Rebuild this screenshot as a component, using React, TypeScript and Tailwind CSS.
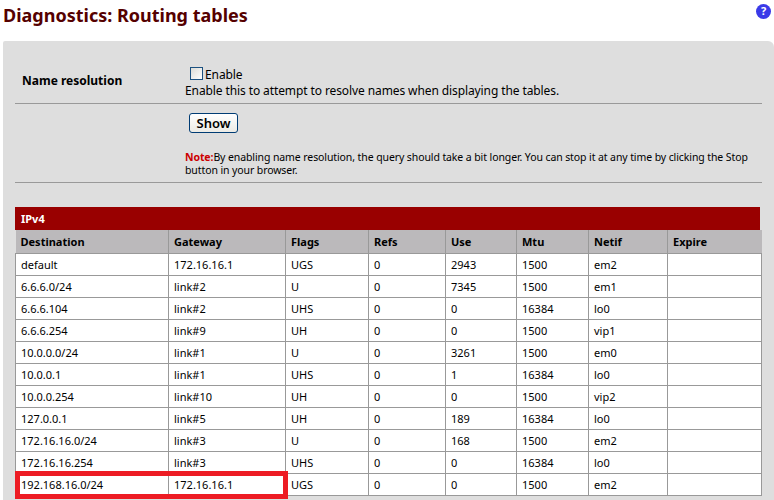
const columns = ["Destination", "Gateway", "Flags", "Refs", "Use", "Mtu", "Netif", "Expire"];

const routes = [
  ["default", "172.16.16.1", "UGS", "0", "2943", "1500", "em2", ""],
  ["6.6.6.0/24", "link#2", "U", "0", "7345", "1500", "em1", ""],
  ["6.6.6.104", "link#2", "UHS", "0", "0", "16384", "lo0", ""],
  ["6.6.6.254", "link#9", "UH", "0", "0", "1500", "vip1", ""],
  ["10.0.0.0/24", "link#1", "U", "0", "3261", "1500", "em0", ""],
  ["10.0.0.1", "link#1", "UHS", "0", "1", "16384", "lo0", ""],
  ["10.0.0.254", "link#10", "UH", "0", "0", "1500", "vip2", ""],
  ["127.0.0.1", "link#5", "UH", "0", "189", "16384", "lo0", ""],
  ["172.16.16.0/24", "link#3", "U", "0", "168", "1500", "em2", ""],
  ["172.16.16.254", "link#3", "UHS", "0", "0", "16384", "lo0", ""],
  ["192.168.16.0/24", "172.16.16.1", "UGS", "0", "0", "1500", "em2", ""],
];

const App = () => {
  return (
    <div className="relative h-[500px] w-[774px] overflow-hidden bg-white font-['Noto_Sans',sans-serif] text-[11px] text-black">
      <div className="flex h-[41px] items-start justify-between pl-[3px] pr-[3px]">
        <h1 className="mt-[4px] text-[18px] leading-[22px] font-bold text-[#550000]">Diagnostics: Routing tables</h1>
        <span className="mt-[4px] flex h-[15px] w-[15px] items-center justify-center rounded-full bg-[#3a3ae8] text-[11px] font-bold text-white">?</span>
      </div>

      <div className="ml-[3px] h-[459px] rounded-tr-[6px] rounded-tl-[2px] bg-[#dedede] pl-[12px] pr-[12px]">
        <div className="flex h-[63px] border-b border-[#999999]">
          <div className="w-[170px] pl-[7px] pt-[33px] text-[12px] leading-[14px] font-bold">Name resolution</div>
          <div className="pt-[26px] text-[12px] tracking-[-0.1px]">
            <label className="ml-[5px] flex h-[14px] items-start gap-[2px] leading-[14px]">
              <span className="h-[13px] w-[13px] border border-[#1c5180] bg-gradient-to-br from-[#dcdcd7] to-white" />
              <span className="pt-[1px]">Enable</span>
            </label>
            <p className="mt-[2px] leading-[15px]">Enable this to attempt to resolve names when displaying the tables.</p>
          </div>
        </div>

        <div className="flex h-[79px] border-b border-[#999999]">
          <div className="w-[170px]" />
          <div className="pt-[9px]">
            <button className="ml-[4px] flex h-[20px] w-[49px] items-center justify-center rounded-[3px] border border-[#003c74] bg-gradient-to-b from-white to-[#ecebe5] text-[13px] leading-none font-semibold">
              Show
            </button>
            <p className="mt-[18px] w-[572px] text-[10.5px] leading-[13px] tracking-[-0.1px]">
              <span className="font-bold text-[#cc0000]">Note:</span>By enabling name resolution, the query should take a bit longer. You can stop it at any time by clicking the Stop button in your browser.
            </p>
          </div>
        </div>

        <div className="mt-[24px] w-[746px]">
          <div className="flex h-[23px] w-[745px] items-center bg-[#990000] pl-[6px] pt-[2px] font-bold text-white">IPv4</div>
          <table className="w-[746px] table-fixed border-collapse">
            <colgroup>
              <col className="w-[153px]" />
              <col className="w-[117px]" />
              <col className="w-[83px]" />
              <col className="w-[77px]" />
              <col className="w-[71px]" />
              <col className="w-[72px]" />
              <col className="w-[79px]" />
              <col className="w-[94px]" />
            </colgroup>
            <thead>
              <tr className="h-[23px] bg-[#bbb9bb]">
                {columns.map((c) => (
                  <th key={c} className="border-x border-b border-[#999999] pl-[5px] pt-[2px] text-left font-bold first:border-l-0 last:border-r-0">
                    {c}
                  </th>
                ))}
              </tr>
            </thead>
            <tbody>
              {routes.map((r) => (
                <tr key={r[0]} className="h-[22px] bg-white">
                  {r.map((v, i) => (
                    <td key={i} className="border border-[#999999] pl-[5px] pt-[2px] text-left">
                      {v}
                    </td>
                  ))}
                </tr>
              ))}
            </tbody>
          </table>
        </div>
      </div>

      <div className="absolute left-[15px] top-[471px] h-[28px] w-[273px] border-[5px] border-[#ed1c24]" />
    </div>
  );
};

export default App;
